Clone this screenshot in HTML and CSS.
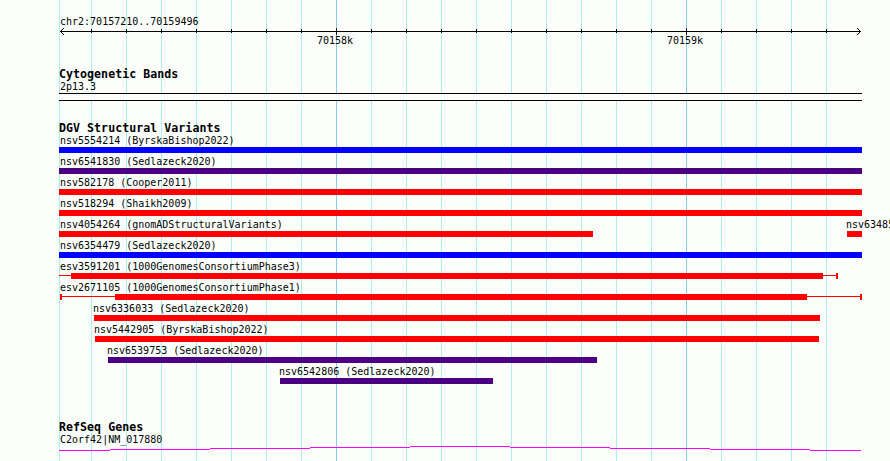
FILE: index.html
```html
<!DOCTYPE html>
<html lang="en">
  <head>
    <meta charset="UTF-8" />
    <meta name="viewport" content="width=device-width, initial-scale=1.0" />
    <title>chr2:70157210..70159496</title>
    <link rel="stylesheet" href="styles.css">
  </head>
  <body>
    <div class="browser">
      <div class="ruler">
        <p class="label">chr2:70157210..70159496</p>
        <svg class="scale" width="831" height="7" shape-rendering="crispEdges">
          <path class="axis" d="M1 3.5H802" />
          <path class="axis" d="M2 2.5h1M3 1.5h1M4 .5h1M2 4.5h1M3 5.5h1M4 6.5h1" />
          <path class="axis" d="M800 2.5h1M799 1.5h1M798 .5h1M800 4.5h1M799 5.5h1M798 6.5h1" />
          <path class="axis" d="M32.5 1v4M67.5 1v4M102.5 1v4M137.5 1v4M172.5 1v4M207.5 1v4M242.5 1v4M312.5 1v4M347.5 1v4M382.5 1v4M417.5 1v4M452.5 1v4M487.5 1v4M522.5 1v4M557.5 1v4M592.5 1v4M662.5 1v4M697.5 1v4M732.5 1v4M767.5 1v4" />
          <path class="axis" d="M277.5 0v7M627.5 0v7" />
        </svg>
        <div class="positions"><span>70158k</span><span>70159k</span></div>
      </div>

      <div class="track cytobands">
        <h2>Cytogenetic Bands</h2>
        <p class="label">2p13.3</p>
        <div class="band"></div>
      </div>

      <div class="track variants">
        <h2>DGV Structural Variants</h2>
        <div class="row">
          <div class="feature full"><p class="label">nsv5554214 (ByrskaBishop2022)</p><div class="bar blue"></div></div>
        </div>
        <div class="row">
          <div class="feature full"><p class="label">nsv6541830 (Sedlazeck2020)</p><div class="bar purple"></div></div>
        </div>
        <div class="row">
          <div class="feature full"><p class="label">nsv582178 (Cooper2011)</p><div class="bar red"></div></div>
        </div>
        <div class="row">
          <div class="feature full"><p class="label">nsv518294 (Shaikh2009)</p><div class="bar red"></div></div>
        </div>
        <div class="row">
          <div class="feature full" style="width: 534px"><p class="label">nsv4054264 (gnomADStructuralVariants)</p><div class="bar red"></div></div>
          <div class="feature" style="margin-left: 254px; width: 15px"><p class="label">nsv63485</p><div class="bar red"></div></div>
        </div>
        <div class="row">
          <div class="feature full"><p class="label">nsv6354479 (Sedlazeck2020)</p><div class="bar blue"></div></div>
        </div>
        <div class="row">
          <div class="feature full">
            <p class="label">esv3591201 (1000GenomesConsortiumPhase3)</p>
            <div class="span">
              <i class="line" style="width: 12px"></i>
              <i class="bar red" style="width: 752px"></i>
              <i class="line" style="width: 13px"></i>
              <i class="cap"></i>
            </div>
          </div>
        </div>
        <div class="row">
          <div class="feature full">
            <p class="label">esv2671105 (1000GenomesConsortiumPhase1)</p>
            <div class="span inset">
              <i class="cap"></i>
              <i class="line" style="width: 53px"></i>
              <i class="bar red" style="width: 692px"></i>
              <i class="line" style="width: 53px"></i>
              <i class="cap"></i>
            </div>
          </div>
        </div>
        <div class="row">
          <div class="feature" style="margin-left: 35px; width: 726px"><p class="label">nsv6336033 (Sedlazeck2020)</p><div class="bar red"></div></div>
        </div>
        <div class="row">
          <div class="feature" style="margin-left: 36px; width: 724px"><p class="label">nsv5442905 (ByrskaBishop2022)</p><div class="bar red"></div></div>
        </div>
        <div class="row">
          <div class="feature" style="margin-left: 49px; width: 489px"><p class="label">nsv6539753 (Sedlazeck2020)</p><div class="bar purple"></div></div>
        </div>
        <div class="row">
          <div class="feature" style="margin-left: 221px; width: 213px"><p class="label">nsv6542806 (Sedlazeck2020)</p><div class="bar purple"></div></div>
        </div>
      </div>

      <div class="track genes">
        <h2>RefSeq Genes</h2>
        <p class="label">C2orf42|NM_017880</p>
        <svg class="gene" width="831" height="5" shape-rendering="crispEdges">
          <path d="M0 4.5H51M51 3.5H151M151 2.5H251M251 1.5H351M351 .5H451M451 1.5H551M551 2.5H651M651 3.5H751M751 4.5H802" />
        </svg>
      </div>
    </div>
  </body>
</html>
```

FILE: styles.css
```css
* {
  margin: 0;
  padding: 0;
  box-sizing: border-box;
}
body {
  background: #fdfffc;
  color: #000;
  font: 10px/12px "DejaVu Sans Mono", "Liberation Mono", monospace;
  overflow: hidden;
}
/* grid: left edge, major lines every 350px, minor lines every 35px */
.browser {
  width: 890px;
  height: 461px;
  padding: 16px 0 0 59px;
  overflow: hidden;
  background-image:
    linear-gradient(#afeeee, #afeeee),
    linear-gradient(90deg, #87ceeb 1px, transparent 1px),
    linear-gradient(90deg, #afeeee 1px, transparent 1px);
  background-size: 1px 100%, 350px 100%, 35px 100%;
  background-position: 59px 0, 336px 0, 91px 0;
  background-repeat: no-repeat, repeat-x, repeat-x;
  position: relative;
}
/* hides the grid outside of the panel */
.browser::before,
.browser::after {
  content: "";
  position: absolute;
  top: 0;
  bottom: 0;
  background: #fdfffc;
}
.browser::before {
  left: 0;
  width: 59px;
}
.browser::after {
  left: 860px;
  right: 0;
}
.ruler,
.track {
  position: relative;
  z-index: 1;
}
.label {
  height: 12px;
  padding-left: 1px;
  white-space: nowrap;
}
.ruler {
  height: 52px;
}
svg {
  display: block;
}
.axis {
  stroke: #000;
  fill: none;
}
.positions {
  display: flex;
  gap: 314px;
  padding-left: 258px;
}
.positions span {
  width: 36px;
}
h2 {
  height: 13px;
  font-size: 11.6px;
  line-height: 13px;
  letter-spacing: 0.04px;
  white-space: nowrap;
}
.cytobands {
  height: 54px;
}
.band {
  width: 803px;
  height: 8px;
  border: solid #000;
  border-width: 1px 0;
  background: #fdfffc;
}
.variants {
  height: 299px;
}
.row {
  display: flex;
  height: 21px;
}
.feature {
  flex: none;
}
.full {
  width: 803px;
}
.feature:not(.full) .label {
  padding-left: 0;
  margin-left: -1px;
}
.bar {
  display: block;
  height: 6px;
}
.blue {
  background: #0000ff;
}
.purple {
  background: #4b0082;
}
.red {
  background: #ff0000;
}
.span {
  display: flex;
}
.inset {
  padding-left: 1px;
}
.line {
  height: 1px;
  margin-top: 2px;
  background: #ff0000;
}
.cap {
  width: 2px;
  height: 6px;
  background: #ff0000;
}
.gene path {
  stroke: #ff00ff;
}
```
